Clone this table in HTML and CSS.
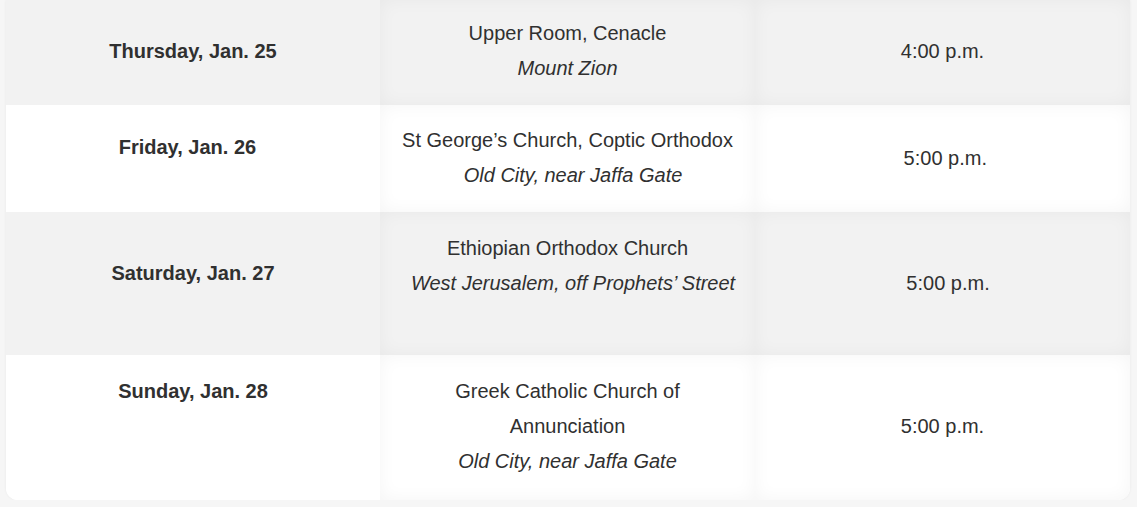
FILE: index.html
```html
<!DOCTYPE html>
<html lang="en">
<head>
<meta charset="utf-8">
<title>Schedule</title>
<link rel="stylesheet" href="styles.css">
</head>
<body>
<div class="card">
  <div class="row row-1 shade">
    <div class="cell date">Thursday, Jan. 25</div>
    <div class="cell place">
      <div>Upper Room, Cenacle</div>
      <div class="loc">Mount Zion</div>
    </div>
    <div class="cell time">4:00 p.m.</div>
  </div>
  <div class="row row-2">
    <div class="cell date"><span class="gap">Friday, Jan. 26&nbsp;&nbsp;</span></div>
    <div class="cell place">
      <div>St George’s Church, Coptic Orthodox</div>
      <div class="loc">&nbsp;&nbsp;Old City, near Jaffa Gate</div>
    </div>
    <div class="cell time">&nbsp;5:00 p.m.</div>
  </div>
  <div class="row row-3 shade">
    <div class="cell date"><span class="gap">Saturday, Jan. 27</span></div>
    <div class="cell place">
      <div>Ethiopian Orthodox Church</div>
      <div class="loc">&nbsp;&nbsp;West Jerusalem, off Prophets’ Street</div>
      <div>&nbsp;</div>
    </div>
    <div class="cell time">&nbsp;&nbsp;5:00 p.m.</div>
  </div>
  <div class="row row-4">
    <div class="cell date top">Sunday, Jan. 28</div>
    <div class="cell place">
      <div>Greek Catholic Church of Annunciation</div>
      <div class="loc">Old City, near Jaffa Gate</div>
    </div>
    <div class="cell time">5:00 p.m.</div>
  </div>
</div>
</body>
</html>
```

FILE: styles.css
```css
html, body {
  margin: 0;
  padding: 0;
}

body {
  background: #f6f6f6;
  font-family: "Liberation Sans", Arial, sans-serif;
  font-size: 20px;
  line-height: 35px;
  color: #303030;
}

.card {
  width: 1124px;
  margin: 0 0 0 6px;
  background: #ffffff;
  border-radius: 0 0 12px 12px;
  overflow: hidden;
  box-shadow: 0 0 3px rgba(0, 0, 0, 0.06);
}

.row {
  display: grid;
  grid-template-columns: 374px 375px 375px;
  background: #ffffff;
}

.row.shade {
  background: #f2f2f2;
}

.cell {
  display: flex;
  flex-direction: column;
  justify-content: center;
  text-align: center;
  padding: 0 20px;
}

.place,
.time {
  box-shadow: inset 0 0 18px rgba(0, 0, 0, 0.045);
}

.row .place {
  padding-left: 17px;
  padding-right: 17px;
}

.date {
  font-weight: bold;
}

.loc {
  font-style: italic;
}

.row-1 .cell {
  padding-top: 16px;
  padding-bottom: 19px;
}

.row-2 .cell {
  padding-top: 18px;
  padding-bottom: 19px;
}

.row-3 .cell {
  padding-top: 19px;
  padding-bottom: 19px;
}

.row-4 .cell {
  padding-top: 19px;
  padding-bottom: 21px;
}

.gap {
  display: block;
  margin-bottom: 21px;
}

.date.top {
  justify-content: flex-start;
}
```
